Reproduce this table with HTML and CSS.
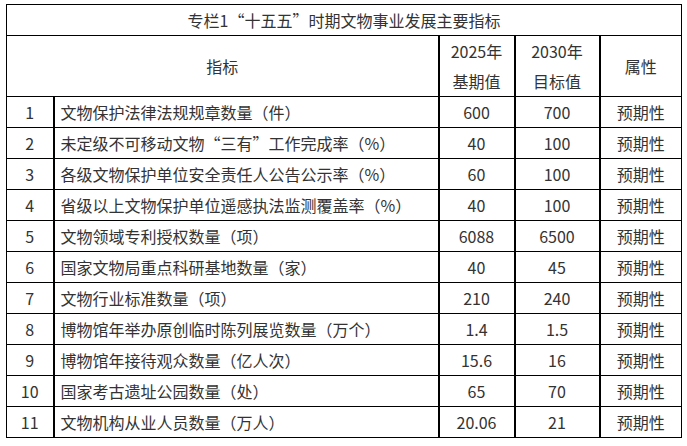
FILE: index.html
```html
<!DOCTYPE html>
<html lang="zh-CN">
<head>
<meta charset="utf-8">
<title>专栏1</title>
<link rel="stylesheet" href="styles.css">
</head>
<body>
<table class="tbl">
  <colgroup>
    <col class="c-no">
    <col class="c-name">
    <col class="c-base">
    <col class="c-goal">
    <col class="c-attr">
  </colgroup>
  <tr class="r-title"><td colspan="5" class="ctr">专栏1“十五五”时期文物事业发展主要指标</td></tr>
  <tr class="r-head">
    <td colspan="2" class="ctr">指标</td>
    <td class="ctr v">2025年<br>基期值</td>
    <td class="ctr v">2030年<br>目标值</td>
    <td class="ctr v">属性</td>
  </tr>
  <tr><td class="ctr v">1</td><td class="v">文物保护法律法规规章数量（件）</td><td class="ctr v">600</td><td class="ctr v">700</td><td class="ctr v">预期性</td></tr>
  <tr><td class="ctr v">2</td><td class="v">未定级不可移动文物“三有”工作完成率（%）</td><td class="ctr v">40</td><td class="ctr v">100</td><td class="ctr v">预期性</td></tr>
  <tr><td class="ctr v">3</td><td class="v">各级文物保护单位安全责任人公告公示率（%）</td><td class="ctr v">60</td><td class="ctr v">100</td><td class="ctr v">预期性</td></tr>
  <tr><td class="ctr v">4</td><td class="v">省级以上文物保护单位遥感执法监测覆盖率（%）</td><td class="ctr v">40</td><td class="ctr v">100</td><td class="ctr v">预期性</td></tr>
  <tr><td class="ctr v">5</td><td class="v">文物领域专利授权数量（项）</td><td class="ctr v">6088</td><td class="ctr v">6500</td><td class="ctr v">预期性</td></tr>
  <tr><td class="ctr v">6</td><td class="v">国家文物局重点科研基地数量（家）</td><td class="ctr v">40</td><td class="ctr v">45</td><td class="ctr v">预期性</td></tr>
  <tr><td class="ctr v">7</td><td class="v">文物行业标准数量（项）</td><td class="ctr v">210</td><td class="ctr v">240</td><td class="ctr v">预期性</td></tr>
  <tr><td class="ctr v">8</td><td class="v">博物馆年举办原创临时陈列展览数量（万个）</td><td class="ctr v">1.4</td><td class="ctr v">1.5</td><td class="ctr v">预期性</td></tr>
  <tr><td class="ctr v">9</td><td class="v">博物馆年接待观众数量（亿人次）</td><td class="ctr v">15.6</td><td class="ctr v">16</td><td class="ctr v">预期性</td></tr>
  <tr><td class="ctr v">10</td><td class="v">国家考古遗址公园数量（处）</td><td class="ctr v">65</td><td class="ctr v">70</td><td class="ctr v">预期性</td></tr>
  <tr><td class="ctr v">11</td><td class="v">文物机构从业人员数量（万人）</td><td class="ctr v">20.06</td><td class="ctr v">21</td><td class="ctr v">预期性</td></tr>
</table>
</body>
</html>
```
FILE: styles.css
```css
html, body {
  margin: 0;
  padding: 0;
  background: #ffffff;
}
body {
  padding: 4px 6px 0 6px;
  font-family: "Noto Sans CJK SC", "Noto Sans", sans-serif;
  font-size: 16px;
  color: #333333;
}
.tbl {
  border-collapse: collapse;
  table-layout: fixed;
  width: 675px;
}
.c-no { width: 47px; }
.c-name { width: 385px; }
.c-base { width: 76px; }
.c-goal { width: 85px; }
.c-attr { width: 82px; }
.tbl td {
  border: 1px solid #000000;
  padding: 0 6px;
  line-height: 30px;
  height: 30px;
  vertical-align: middle;
  white-space: nowrap;
}
.tbl td.v {
  border-left: 2px solid #000000;
}
.tbl td:first-child {
  border-left: 1px solid #000000;
}
.tbl td:last-child {
  border-right: 1px solid #000000;
}
.tbl td.ctr {
  text-align: center;
}
.r-head td {
  height: 60px;
}
```
